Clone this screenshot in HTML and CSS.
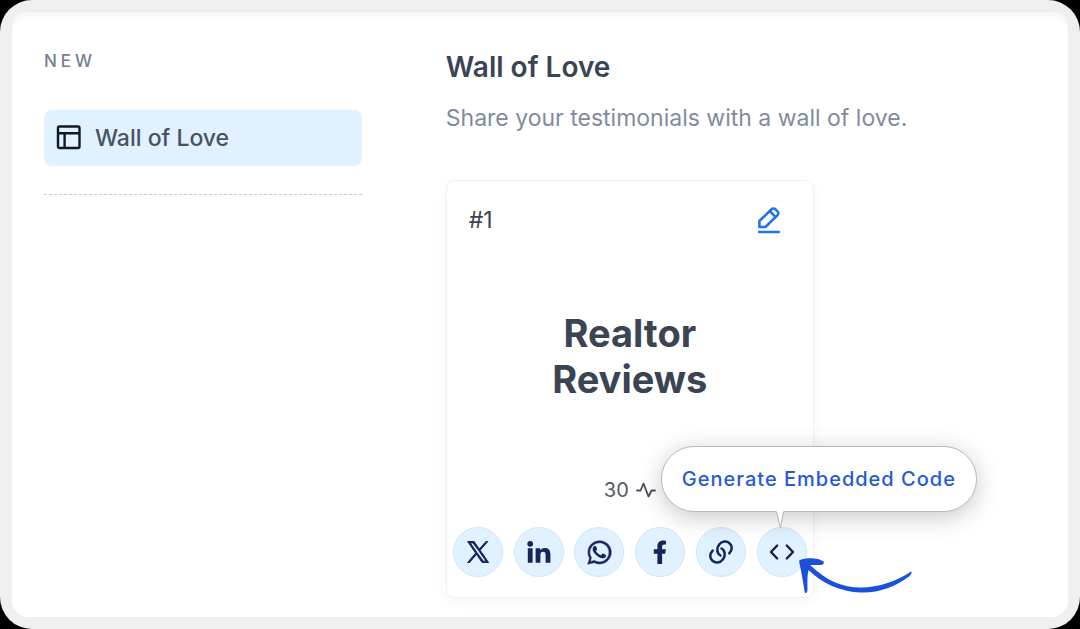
FILE: index.html
```html
<!DOCTYPE html>
<html lang="en">
<head>
    <meta charset="UTF-8">
    <meta name="viewport" content="width=device-width, initial-scale=1.0">
    <title>Wall of Love</title>
    <link rel="stylesheet" href="styles.css">
</head>

<body>
    <div class="frame">
        <div class="panel">
            <aside class="sidebar">
                <h2 class="sidebar-label">NEW</h2>
                <a class="sidebar-link" href="#wall">
                    <svg width="26" height="26" viewBox="0 0 26 26" fill="none" stroke="#111820" stroke-width="2.4" stroke-linejoin="round">
                        <rect x="2" y="1.500" width="21.500" height="21.500" rx="1.500"/>
                        <path d="M2 8.300h21.500M8.600 8.300V23"/>
                    </svg>
                    Wall of Love
                </a>
                <hr class="sidebar-line">
            </aside>

            <main class="content" id="wall">
                <h1 class="content-title">Wall of Love</h1>
                <p class="content-text">Share your testimonials with a wall of love.</p>

                <section class="card">
                    <div class="card-header">
                        <span>#1</span>
                        <button class="edit" aria-label="Edit">
                            <svg width="24" height="28" viewBox="0 0 24 28" fill="none" stroke="#1f74ea" stroke-width="2.6" stroke-linecap="round" stroke-linejoin="round">
                                <path d="M2.400 21v-6L14.600 3.200a2.600 2.600 0 0 1 3.700 0l2.200 2.200a2.600 2.600 0 0 1 0 3.700L8.400 21z"/>
                                <path d="M12.800 5.200l5.600 5.600M2.200 26h19.600"/>
                            </svg>
                        </button>
                    </div>

                    <h2 class="card-title">Realtor<br>Reviews</h2>

                    <div class="card-count">
                        30
                        <svg width="20" height="18" viewBox="0 0 20 18" fill="none" stroke="#4a4f5a" stroke-width="1.800" stroke-linecap="round" stroke-linejoin="round">
                            <path d="M1 9.500h3.500L7.500 2.500l5 13L15.500 9.500H19"/>
                        </svg>
                    </div>

                    <div class="share">
                        <button class="share-button" aria-label="Share on X">
                            <svg width="24" height="24" viewBox="0 0 24 24" fill="#16265c">
                                <path d="M14.200 10.300 21.800 1.500h-1.900l-6.600 7.600L8.100 1.500H1.600l8 11.600L1.600 22.500h1.900l7-8.100 5.600 8.100h6.500zM11.500 13.300l-.9-1.200L4.300 2.900h2.700l5.400 7.400.9 1.200 6.800 9.700h-2.800z" stroke="#16265c" stroke-width="1"/>
                            </svg>
                        </button>
                        <button class="share-button" aria-label="Share on LinkedIn">
                            <svg width="24" height="24" viewBox="0 0 24 24" fill="#16265c">
                                <circle cx="3.200" cy="3.800" r="2.900"/>
                                <path d="M.8 8.300h4.800v14.500H.8zM8.600 8.300h4.600v2c.9-1.500 2.400-2.400 4.600-2.400 4.300 0 5.600 2.700 5.600 6.700v8.200h-4.800v-7.300c0-2-.3-3.700-2.400-3.700-2.300 0-2.800 1.700-2.800 3.600v7.400H8.600z"/>
                            </svg>
                        </button>
                        <button class="share-button" aria-label="Share on WhatsApp">
                            <svg width="27" height="27" viewBox="0 0 24 24" fill="#16265c">
                                <path d="M12.040 1.500C6.300 1.500 1.700 6.100 1.700 11.800c0 1.800.5 3.600 1.400 5.200L1.500 22.500l5.700-1.500c1.500.8 3.200 1.200 4.900 1.200 5.700 0 10.400-4.600 10.400-10.400S17.800 1.500 12.040 1.500zm0 18.900c-1.600 0-3.100-.4-4.400-1.200l-.3-.2-3.400.9.900-3.300-.2-.3a8.500 8.500 0 1 1 7.400 4.100z" stroke="#16265c" stroke-width=".4"/>
                                <path d="M8.900 6.700c-.2-.4-.4-.4-.6-.4h-.6c-.2 0-.5.1-.8.400-.300.3-1 1-1 2.400s1 2.800 1.200 3c.1.200 2 3.200 5 4.300 2.500 1 3 .8 3.500.7.600 0 1.800-.7 2-1.400.3-.7.3-1.300.2-1.400-.1-.2-.3-.2-.6-.4l-2-1c-.3-.1-.5-.1-.7.200l-.9 1.100c-.2.2-.4.2-.7.100-.3-.2-1.200-.5-2.300-1.400-.9-.8-1.400-1.700-1.600-2-.2-.3 0-.5.1-.6l.8-1c.1-.2.1-.4 0-.6z"/>
                            </svg>
                        </button>
                        <button class="share-button" aria-label="Share on Facebook">
                            <svg width="24" height="24" viewBox="0 0 24 24" fill="#16265c">
                                <path d="M9.400 24V13.700H5.800V9.300h3.600V6.200C9.400 2.500 11.600.4 15 .4c1.500 0 3 .3 3 .3v3.700h-1.700c-1.700 0-2.200 1-2.200 2.100v2.800h3.800l-.7 4.400h-3.100V24z"/>
                            </svg>
                        </button>
                        <button class="share-button" aria-label="Copy link">
                            <svg width="26" height="26" viewBox="0 0 26 26" fill="none" stroke="#16265c" stroke-width="2.500" stroke-linecap="round">
                                <path d="M12.500 16.500C8.800 14.500 8.200 9.500 11 5.800C13.800 2 18.500 1.500 21.500 4.200C24.500 7 24.500 11 21.300 14.300"/>
                                <path d="M13.500 9.500C17.200 11.500 17.800 16.500 15 20.200C12.200 24 7.500 24.500 4.500 21.800C1.500 19 1.500 15 4.700 11.700"/>
                            </svg>
                        </button>
                        <div class="share-code">
                            <button class="share-button" aria-label="Embed code" aria-describedby="code-tip">
                                <svg width="26" height="18" viewBox="0 0 26 18" fill="none" stroke="#16204a" stroke-width="2.400" stroke-linecap="round" stroke-linejoin="round">
                                    <path d="M8.200 2.500L2 9l6.200 6.500M17.800 2.500L24 9l-6.200 6.500"/>
                                </svg>
                            </button>
                            <div class="tooltip" id="code-tip" role="tooltip">Generate Embedded Code</div>
                            <svg class="tooltip-tip" width="12" height="18" viewBox="0 0 12 18">
                                <path d="M1.500 0l4 17L8.500 0z" fill="#fff"/>
                                <path d="M1.500 1l4 16L8.500 1" fill="none" stroke="#b5b5b5"/>
                            </svg>
                            <svg class="arrow" width="114" height="38" viewBox="0 0 114 38" fill="#1a50dc">
                                <path d="M1 3C8 0 20 1 24.500 4.500C26 7 23 8.500 19 8L11 8C28 24 43 30.500 62 30.500C80 30.500 98 24 112 14.500C113.500 15.500 112 17.500 110 19.500C96 30 80 36 62 35.500C41 35 23 26 9.500 13C8 19 8.500 27 8.500 33C8 37 6 37 5.500 34C4 25 2.500 15 .5 6.500C0 4.500 0 3.500 1 3z"/>
                            </svg>
                        </div>
                    </div>
                </section>
            </main>
        </div>
    </div>
</body>
</html>
```
FILE: styles.css
```css
* {
    box-sizing: border-box;
}
body {
    margin: 0;
    background-color: #000;
    font-family: Inter, "Liberation Sans", sans-serif;
    color: #3b4453;
}
h1, h2, p {
    margin: 0;
}
svg {
    display: block;
}
button {
    padding: 0;
    border: none;
    background: none;
    cursor: pointer;
}
.frame {
    display: flex;
    min-height: 100vh;
    padding: 12px;
    background-color: #efefef;
    border-radius: 32px;
}
.panel {
    flex: 1;
    display: grid;
    grid-template-columns: 35fr 65fr;
    gap: 84px;
    padding: 34px 32px 18px;
    background-color: #fff;
    border-radius: 16px;
    box-shadow: inset 0 6px 6px -3px #f4f4f4;
}
.sidebar-label {
    margin-top: 5px;
    font-size: 17px;
    line-height: 20px;
    font-weight: 500;
    letter-spacing: 4px;
    color: #738094;
}
.sidebar-link {
    display: flex;
    align-items: center;
    gap: 13px;
    height: 56px;
    margin-top: 39px;
    padding: 0 12px;
    border-radius: 8px;
    background-color: #e0f1ff;
    font-size: 23px;
    font-weight: 500;
    color: #475365;
    text-decoration: none;
}
.sidebar-line {
    margin: 28px 0 0;
    border: none;
    border-top: 1px dashed #c6c8cb;
}
.content-title {
    font-size: 28px;
    line-height: 42px;
    font-weight: 600;
}
.content-text {
    margin-top: 14px;
    font-size: 23px;
    line-height: 32px;
    color: #7f8ba0;
}
.card {
    display: flex;
    flex-direction: column;
    width: 62%;
    min-width: 368px;
    margin-top: 46px;
    padding: 23px 6px 20px;
    border: 1px solid #f2f2f2;
    border-radius: 8px;
    background-color: #fff;
    box-shadow: 0 4px 14px rgba(0, 0, 0, 0.04);
}
.card-header {
    display: flex;
    justify-content: space-between;
    align-items: center;
    padding: 0 26px 0 16px;
    font-size: 23px;
    line-height: 32px;
}
.card-title {
    margin-top: 74px;
    font-size: 38px;
    line-height: 46px;
    font-weight: 700;
    text-align: center;
}
.card-count {
    display: flex;
    justify-content: center;
    align-items: center;
    gap: 7px;
    margin-top: 76px;
    font-size: 20px;
    line-height: 24px;
    color: #555a64;
}
.share {
    display: flex;
    justify-content: space-between;
    margin-top: 25px;
}
.share-button {
    display: flex;
    justify-content: center;
    align-items: center;
    width: 50px;
    height: 50px;
    border: 1px solid #d0e6f7;
    border-radius: 50%;
    background-color: #e0f1ff;
}
.share-code {
    position: relative;
}
/* tooltip and its pointer float over the card */
.tooltip {
    position: absolute;
    bottom: 65px;
    left: -96px;
    padding: 16px 20px;
    border: 1px solid #b9b9b9;
    border-radius: 33px;
    background-color: #fff;
    box-shadow: 0 5px 24px rgba(0, 0, 0, 0.22);
    font-size: 20px;
    line-height: 32px;
    font-weight: 500;
    letter-spacing: 1px;
    white-space: nowrap;
    color: #2859d4;
}
.tooltip-tip {
    position: absolute;
    bottom: 48px;
    left: 18px;
}
.arrow {
    position: absolute;
    top: 30px;
    left: 42px;
}
```
